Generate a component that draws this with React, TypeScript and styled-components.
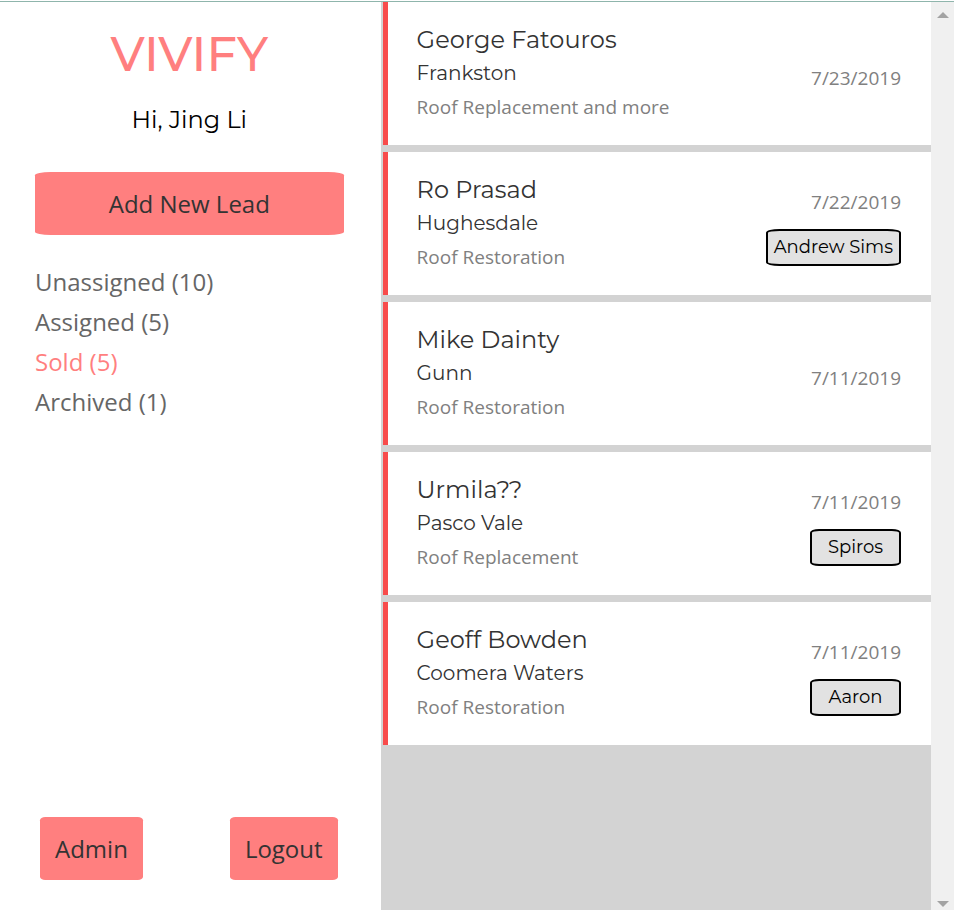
import React, { useState } from "react";
import styled, { createGlobalStyle } from "styled-components";

const display = `"Montserrat", "Inter", sans-serif`;
const body = `"Open Sans", sans-serif`;

const GlobalStyle = createGlobalStyle`
  *, *::before, *::after { box-sizing: border-box; }
  html, body, #root { height: 100%; }
  body { margin: 0; padding-top: 1px; background: #fff; font-family: ${body}; }
  h1, h2, h3, p, ul { margin: 0; padding: 0; font-weight: 400; }
  button { font: inherit; cursor: pointer; }
`;

const Page = styled.div`
  display: grid;
  grid-template-columns: calc(40% - 1px) minmax(0, 1fr);
  height: 100%;
  border-top: 1px solid #8fb5ac;
`;

const Sidebar = styled.aside`
  display: flex;
  flex-direction: column;
  padding: 20px 37px 30px 35px;
`;

const Brand = styled.h1`
  font-family: ${display};
  font-size: 48px;
  font-weight: 500;
  line-height: 64px;
  text-align: center;
  color: #ff7f7f;
`;

const Greeting = styled.p`
  margin: 16px 0 34px;
  font-family: ${display};
  font-size: 24px;
  line-height: 36px;
  text-align: center;
  color: #000;
`;

const Button = styled.button`
  padding: 0 15px;
  border: 0;
  border-radius: 5%;
  background: #ff7f7f;
  color: #333;
  font-size: 24px;
  font-weight: 500;
  line-height: 63px;
`;

const Filters = styled.ul`
  margin-top: 27px;
  list-style: none;
`;

const FilterButton = styled.button<{ $active: boolean }>`
  display: block;
  padding: 0;
  border: 0;
  background: none;
  color: ${(p) => (p.$active ? "#ff7f7f" : "#666")};
  font-size: 24px;
  line-height: 40px;
`;

const Footer = styled.footer`
  display: flex;
  justify-content: space-between;
  margin-top: auto;
  padding: 0 6px 0 5px;
`;

const Panel = styled.main`
  display: flex;
  min-height: 0;
  background: #d3d3d3;
`;

const Leads = styled.ul`
  display: flex;
  flex: 1;
  flex-direction: column;
  gap: 7px;
  min-width: 0;
  padding-left: 2px;
  list-style: none;
`;

const Lead = styled.li`
  display: flex;
  align-items: center;
  justify-content: space-between;
  padding: 21px 30px 20px 29px;
  border-left: 5px solid #f84c4c;
  background: #fff;
`;

const Name = styled.h2`
  font-family: ${display};
  font-size: 24px;
  line-height: 34px;
  color: #333;
`;

const Suburb = styled.h3`
  font-family: ${display};
  font-size: 20px;
  line-height: 32px;
  color: #333;
`;

const Job = styled.p`
  font-size: 19px;
  line-height: 36px;
  color: #808080;
`;

const Meta = styled.div`
  display: flex;
  flex-direction: column;
  align-items: flex-end;
  gap: 15px;
  padding-bottom: 2px;
`;

const DateText = styled.time`
  padding-top: 9px;
  font-size: 19px;
  line-height: 24px;
  color: #808080;
`;

const Assignee = styled.span`
  min-width: 91px;
  padding: 0 6px;
  border: 2px solid #000;
  border-radius: 10%;
  background: #e2e2e2;
  color: #000;
  font-family: ${display};
  font-size: 18px;
  line-height: 33px;
  text-align: center;
`;

const ScrollTrack = styled.div`
  display: flex;
  flex-direction: column;
  align-items: center;
  justify-content: space-between;
  width: 23px;
  padding: 10px 0 3px 1px;
  background: #f0f0f0;
`;

const Arrow = ({ down = false }: { down?: boolean }) => (
  <svg width="12" height="6" viewBox="0 0 12 6" aria-hidden="true">
    <path d={down ? "M0 0h12L6 6z" : "M0 6h12L6 0z"} fill="#a3a3a3" />
  </svg>
);

const filters = [
  { label: "Unassigned", count: 10 },
  { label: "Assigned", count: 5 },
  { label: "Sold", count: 5 },
  { label: "Archived", count: 1 },
];

const leads = [
  { name: "George Fatouros", suburb: "Frankston", job: "Roof Replacement and more", date: "7/23/2019" },
  { name: "Ro Prasad", suburb: "Hughesdale", job: "Roof Restoration", date: "7/22/2019", assignee: "Andrew Sims" },
  { name: "Mike Dainty", suburb: "Gunn", job: "Roof Restoration", date: "7/11/2019" },
  { name: "Urmila??", suburb: "Pasco Vale", job: "Roof Replacement", date: "7/11/2019", assignee: "Spiros" },
  { name: "Geoff Bowden", suburb: "Coomera Waters", job: "Roof Restoration", date: "7/11/2019", assignee: "Aaron" },
];

export default function App() {
  const [active, setActive] = useState("Sold");
  return (
    <>
      <GlobalStyle />
      <Page>
        <Sidebar>
          <Brand>VIVIFY</Brand>
          <Greeting>Hi, Jing Li</Greeting>
          <Button type="button">Add New Lead</Button>
          <Filters>
            {filters.map(({ label, count }) => (
              <li key={label}>
                <FilterButton
                  type="button"
                  $active={active === label}
                  aria-pressed={active === label}
                  onClick={() => setActive(label)}
                >
                  {label} ({count})
                </FilterButton>
              </li>
            ))}
          </Filters>
          <Footer>
            <Button type="button">Admin</Button>
            <Button type="button">Logout</Button>
          </Footer>
        </Sidebar>
        <Panel>
          <Leads>
            {leads.map((lead) => (
              <Lead key={lead.name}>
                <div>
                  <Name>{lead.name}</Name>
                  <Suburb>{lead.suburb}</Suburb>
                  <Job>{lead.job}</Job>
                </div>
                <Meta>
                  <DateText>{lead.date}</DateText>
                  {lead.assignee && <Assignee>{lead.assignee}</Assignee>}
                </Meta>
              </Lead>
            ))}
          </Leads>
          <ScrollTrack>
            <Arrow />
            <Arrow down />
          </ScrollTrack>
        </Panel>
      </Page>
    </>
  );
}
